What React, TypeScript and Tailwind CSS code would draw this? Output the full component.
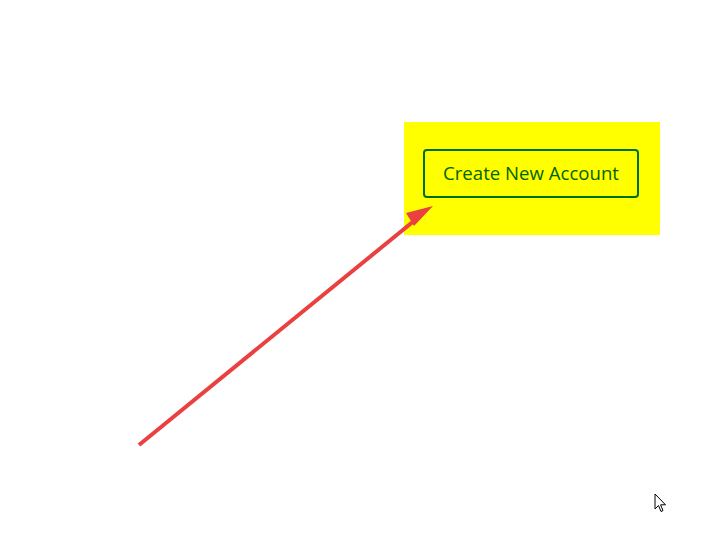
import React from "react";

export default function App() {
  return (
    <div className="relative w-[717px] h-[533px] bg-white overflow-hidden" style={{ fontFamily: '"Open Sans", "Noto Sans", sans-serif' }}>
      <div className="pt-[122px] pl-[404px]">
        <div className="w-[256px] h-[113px] bg-[#ffff00] pt-[27px] pl-[19px]">
          <button className="w-[216px] h-[49px] border-2 border-[#00700f] rounded-[4px] text-[#006400] text-[18.6px] flex items-center justify-center pb-[2px]">
            Create New Account
          </button>
        </div>
      </div>
      <svg className="absolute left-0 top-0" width="717" height="533" viewBox="0 0 717 533">
        <line x1="139" y1="445" x2="420" y2="216" stroke="#ea4040" strokeWidth="4" />
        <polygon points="433,206 414,226 406,213" fill="#ea4040" />
      </svg>
      <svg className="absolute left-[654px] top-[493px]" width="14" height="21" viewBox="0 0 14 21">
        <path d="M1 1 L1 16 L4.5 12.5 L7 18.5 L9 17.6 L6.6 11.8 L11.5 11.8 Z" fill="white" stroke="black" strokeWidth="1" strokeLinejoin="miter" />
      </svg>
    </div>
  );
}
